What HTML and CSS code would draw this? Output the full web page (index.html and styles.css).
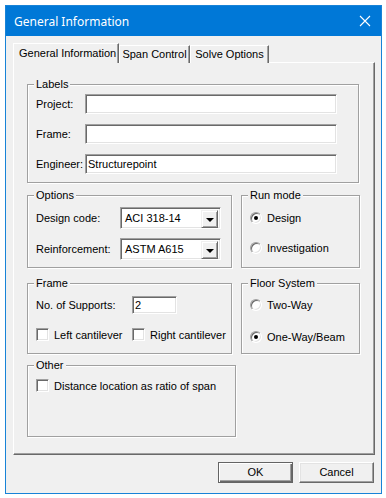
FILE: index.html
```html
<!DOCTYPE html>
<html lang="en">
<head>
<meta charset="utf-8">
<title>General Information</title>
<link rel="stylesheet" href="styles.css">
</head>
<body>

<div class="window">
  <div class="titlebar">
    <span class="title">General Information</span>
    <svg class="close" width="12" height="12" viewBox="0 0 12 12">
      <path d="M1 1 L11 11 M11 1 L1 11" stroke="#fff" stroke-width="1.1" fill="none"/>
    </svg>
  </div>

  <div class="client">
    <div class="tabs">
      <div class="tab active tab1">General Information</div>
      <div class="tab tab2">Span Control</div>
      <div class="tab tab3">Solve Options</div>
    </div>

    <div class="panel">

      <div class="group labels">
        <div class="group-title">Labels</div>
        <div class="group-body labels-body">
          <div class="label-grid">
            <span>Project:</span>
            <div class="edit"></div>
            <span>Frame:</span>
            <div class="edit"></div>
            <span>Engineer:</span>
            <div class="edit">Structurepoint</div>
          </div>
        </div>
      </div>

      <div class="row row2">
        <div class="group options">
          <div class="group-title">Options</div>
          <div class="group-body options-body">
            <div class="option-grid">
              <span>Design code:</span>
              <div class="combo"><span class="combo-text">ACI 318-14</span><span class="drop"><i class="arrow"></i></span></div>
              <span>Reinforcement:</span>
              <div class="combo"><span class="combo-text">ASTM A615</span><span class="drop"><i class="arrow"></i></span></div>
            </div>
          </div>
        </div>
        <div class="group side runmode">
          <div class="group-title">Run mode</div>
          <div class="group-body runmode-body">
            <div class="radios">
              <div class="radio-row"><span class="radio checked"><i class="dot"></i></span>Design</div>
              <div class="radio-row"><span class="radio"></span>Investigation</div>
            </div>
          </div>
        </div>
      </div>

      <div class="row row3">
        <div class="group frame">
          <div class="group-title">Frame</div>
          <div class="group-body frame-body">
            <div class="supports">
              <span class="supports-label">No. of Supports:</span>
              <div class="edit small">2</div>
            </div>
            <div class="checks">
              <div class="check-row left"><span class="checkbox"></span>Left cantilever</div>
              <div class="check-row"><span class="checkbox"></span>Right cantilever</div>
            </div>
          </div>
        </div>
        <div class="group side floor">
          <div class="group-title">Floor System</div>
          <div class="group-body floor-body">
            <div class="radios floor-radios">
              <div class="radio-row"><span class="radio"></span>Two-Way</div>
              <div class="radio-row"><span class="radio checked"><i class="dot"></i></span>One-Way/Beam</div>
            </div>
          </div>
        </div>
      </div>

      <div class="group other">
        <div class="group-title">Other</div>
        <div class="group-body other-body">
          <div class="check-row"><span class="checkbox"></span>Distance location as ratio of span</div>
        </div>
      </div>

    </div>

    <div class="buttons">
      <div class="button default">OK</div>
      <div class="button">Cancel</div>
    </div>
  </div>
</div>

</body>
</html>
```

FILE: styles.css
```css
* {
	box-sizing: border-box;
}
body {
	margin: 0;
	background: #ffffff;
	font-family: "Liberation Sans", Arial, sans-serif;
	font-size: 11px;
	color: #000000;
}

/* window frame */
.window {
	margin: 5px 0 0 5px;
	width: 377px;
	height: 489px;
	border: 1px solid #1883d7;
	background: #f0f0f0;
}
.titlebar {
	height: 30px;
	background: #0078d7;
	display: flex;
	align-items: center;
	justify-content: space-between;
	padding: 0 10px 0 8px;
}
.title {
	font-family: "Noto Sans", "Open Sans", sans-serif;
	font-size: 12px;
	color: #ffffff;
}
.close {
	display: block;
}
.client {
	padding: 7px 0 0 7px;
}

/* tabs */
.tabs {
	display: flex;
	align-items: flex-end;
	height: 20px;
	margin-bottom: -1px;
}
.tab {
	height: 18px;
	line-height: 16px;
	text-align: center;
	background: #f0f0f0;
	border-top: 1px solid #ffffff;
	border-left: 1px solid #ffffff;
	border-right: 1px solid #696969;
	box-shadow: inset -1px 0 #a0a0a0;
}
.tab.active {
	height: 20px;
	line-height: 18px;
	position: relative;
	z-index: 1;
	text-align: left;
	padding-left: 5px;
}
.tab1 {
	width: 106px;
}
.tab2 {
	width: 71px;
}
.tab3 {
	width: 79px;
}

.panel {
	width: 362px;
	height: 393px;
	background: #f0f0f0;
	border-top: 1px solid #ffffff;
	border-left: 1px solid #ffffff;
	border-right: 1px solid #696969;
	border-bottom: 1px solid #696969;
	box-shadow: inset -1px -1px #a0a0a0;
	padding: 21px 0 0 13px;
}

/* group boxes */
.group {
	border: 1px solid #a0a0a0;
	box-shadow: inset 1px 1px #ffffff, 1px 1px #ffffff;
}
.group-title {
	width: fit-content;
	height: 13px;
	line-height: 13px;
	margin: -7px 0 -6px 6px;
	padding: 0 2px;
	background: #f0f0f0;
}
.row {
	display: flex;
}
.side {
	margin-left: 9px;
	width: 119px;
}

.labels {
	width: 332px;
	height: 99px;
}
.labels-body {
	padding: 9px 0 0 8px;
}
.label-grid {
	display: grid;
	grid-template-columns: 49px 252px;
	grid-auto-rows: 20px;
	row-gap: 10px;
	align-items: center;
}

.row2 {
	margin-top: 12px;
}
.options {
	width: 205px;
	height: 73px;
}
.options-body {
	padding: 11px 0 0 8px;
}
.runmode {
	height: 73px;
}
.runmode-body {
	padding: 15px 0 0 8px;
}
.option-grid {
	display: grid;
	grid-template-columns: 84px 101px;
	grid-auto-rows: 22px;
	row-gap: 9px;
	align-items: center;
}

.row3 {
	margin-top: 15px;
}
.frame {
	width: 205px;
	height: 71px;
}
.frame-body {
	padding: 12px 0 0 8px;
}
.floor {
	height: 71px;
}
.floor-body {
	padding: 14px 0 0 8px;
}

.other {
	margin-top: 11px;
	width: 209px;
	height: 72px;
}
.other-body {
	padding: 13px 0 0 8px;
}

/* controls */
.edit {
	height: 20px;
	background: #ffffff;
	border-top: 1px solid #a0a0a0;
	border-left: 1px solid #a0a0a0;
	border-right: 1px solid #ffffff;
	border-bottom: 1px solid #ffffff;
	box-shadow: inset 1px 1px #696969, inset -1px -1px #e3e3e3;
	padding-left: 2px;
	line-height: 18px;
}
.edit.small {
	width: 45px;
	height: 18px;
	line-height: 16px;
}
.combo {
	height: 22px;
	background: #ffffff;
	border-top: 1px solid #a0a0a0;
	border-left: 1px solid #a0a0a0;
	border-right: 1px solid #ffffff;
	border-bottom: 1px solid #ffffff;
	box-shadow: inset 1px 1px #696969, inset -1px -1px #e3e3e3;
	padding: 2px 2px 0 2px;
	display: flex;
	justify-content: space-between;
}
.combo-text {
	padding: 2px 0 0 2px;
}
.drop {
	width: 17px;
	height: 18px;
	background: #f0f0f0;
	border-top: 1px solid #f0f0f0;
	border-left: 1px solid #f0f0f0;
	border-right: 1px solid #696969;
	border-bottom: 1px solid #696969;
	box-shadow: inset 1px 1px #ffffff, inset -1px -1px #a0a0a0;
	display: flex;
	align-items: center;
	justify-content: center;
}
.arrow {
	width: 0;
	height: 0;
	border-left: 4px solid transparent;
	border-right: 4px solid transparent;
	border-top: 4px solid #000000;
	margin-top: 1px;
}

.supports {
	display: flex;
	align-items: center;
}
.supports-label {
	width: 96px;
}
.checks {
	display: flex;
	margin-top: 14px;
}
.check-row {
	display: flex;
	align-items: center;
	height: 13px;
}
.check-row.left {
	width: 96px;
}
.checkbox {
	width: 13px;
	height: 13px;
	margin-right: 5px;
	background: #ffffff;
	border-top: 1px solid #a0a0a0;
	border-left: 1px solid #a0a0a0;
	border-right: 1px solid #ffffff;
	border-bottom: 1px solid #ffffff;
	box-shadow: inset 1px 1px #696969, inset -1px -1px #e3e3e3;
}

.radios {
	display: flex;
	flex-direction: column;
	gap: 17px;
}
.floor-radios {
	gap: 19px;
}
.radio-row {
	display: flex;
	align-items: center;
	height: 13px;
}
.radio {
	width: 12px;
	height: 12px;
	margin-right: 5px;
	border-radius: 50%;
	background: #ffffff;
	border: 1px solid;
	border-color: #a0a0a0 #ffffff #ffffff #a0a0a0;
	box-shadow: inset 1px 1px #696969, inset -1px -1px #e3e3e3;
	display: flex;
	align-items: center;
	justify-content: center;
}
.dot {
	width: 4px;
	height: 4px;
	border-radius: 50%;
	background: #000000;
}

/* buttons */
.buttons {
	width: 362px;
	margin-top: 7px;
	display: flex;
	justify-content: flex-end;
	gap: 6px;
	padding-right: 1px;
}
.button {
	width: 75px;
	height: 21px;
	line-height: 19px;
	text-align: center;
	background: #f0f0f0;
	border-top: 1px solid #ffffff;
	border-left: 1px solid #ffffff;
	border-right: 1px solid #696969;
	border-bottom: 1px solid #696969;
	box-shadow: inset -1px -1px #a0a0a0, inset 1px 1px #e3e3e3;
}
.button.default {
	border: 1px solid #646464;
	box-shadow: inset 1px 1px #ffffff, inset -1px -1px #696969, inset -2px -2px #a0a0a0;
}
```
